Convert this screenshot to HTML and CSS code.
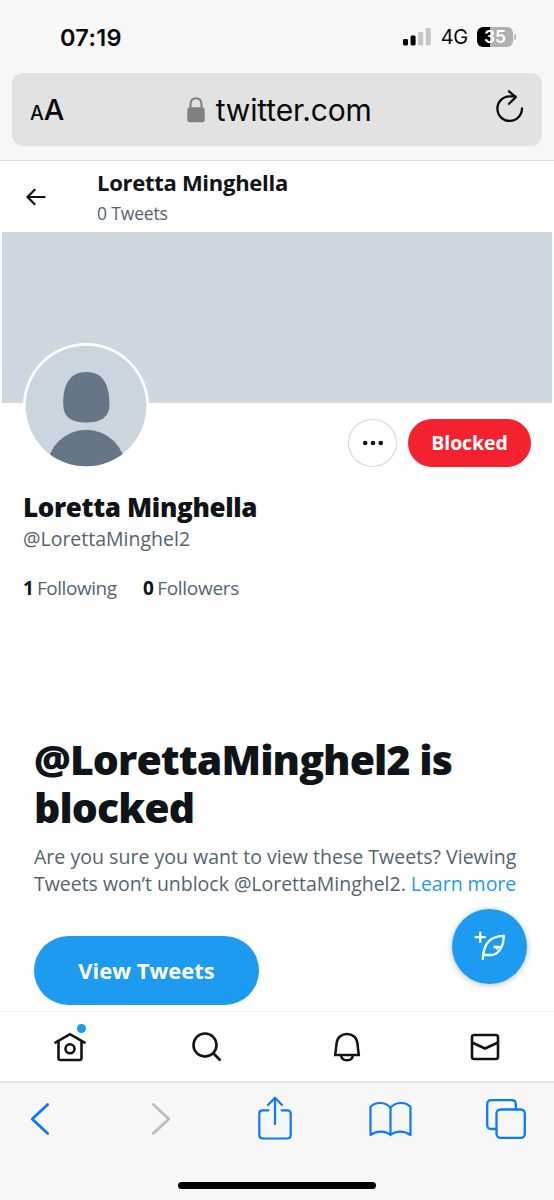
FILE: index.html
```html
<!DOCTYPE html>
<html lang="en">
<head>
<meta charset="utf-8">
<title>Loretta Minghella</title>
<link rel="stylesheet" href="styles.css">
</head>
<body>
<div class="phone">
  <div class="browser-top">
    <div class="status">
      <span class="clock">07:19</span>
      <div class="signals">
        <svg class="bars" width="28" height="18" viewBox="0 0 28 18"><rect x="0" y="11" width="5" height="6.5" rx="1.4"/><rect x="7.6" y="7.5" width="5" height="10" rx="1.4"/><g fill="#c6c6c6"><rect x="15.2" y="4" width="5" height="13.500" rx="1.4"/><rect x="22.800" y="0" width="5" height="17.500" rx="1.4"/></g></svg>
        <span class="network">4G</span>
        <div class="battery"><span class="level">35</span></div>
        <span class="battery-tip"></span>
      </div>
    </div>
    <div class="address">
      <span class="text-size"><small>A</small>A</span>
      <div class="domain">
        <svg width="18" height="26" viewBox="0 0 18 26"><rect x="0.300" y="10.300" width="17.400" height="15" rx="2.600" fill="#808084"/><path d="M3.500 11V7.200C3.500 3.300 5.800 1.200 9 1.200s5.500 2.100 5.500 6V11" fill="none" stroke="#808084" stroke-width="2.100"/></svg>
        <span>twitter.com</span>
      </div>
      <svg class="reload" width="30" height="36" viewBox="0 0 30 36"><path d="M27 18.500A12.300 12.300 0 1 1 14.700 6.300H20.500M14 1.300l6.800 5.800-6.800 6.700" fill="none" stroke="#0a0a0a" stroke-width="2.300" stroke-linecap="round" stroke-linejoin="round"/></svg>
    </div>
  </div>

  <header class="page-head">
    <svg width="20" height="18" viewBox="0 0 20 18"><path d="M19.500 9H2M9.200 1.200L1.500 9l7.700 7.800" fill="none" stroke="#0f1419" stroke-width="2.200"/></svg>
    <div class="head-text"><div class="head-name">Loretta Minghella</div><div class="head-count">0 Tweets</div></div>
  </header>

  <div class="banner"></div>
  <section class="profile">
    <div class="actions">
      <svg class="avatar" width="126" height="126" viewBox="0 0 126 126"><defs><clipPath id="face"><circle cx="63" cy="63" r="60.300"/></clipPath></defs><circle cx="63" cy="63" r="63" fill="#fff"/><g clip-path="url(#face)"><path d="M0 0h126v126H0z" fill="#cbd5dd"/><path d="M63.300 29C79 29 86.500 40 86.500 61c0 13-8 18.500-23.200 18.500S40.200 74 40.200 61c0-21 7.500-32 23.100-32z" fill="#657786"/><circle cx="63.300" cy="126" r="39.300" fill="#657786"/></g></svg>
      <div class="more"><svg width="22" height="6" viewBox="0 0 22 6"><g fill="#0f1419"><circle cx="3.200" cy="3" r="2.300"/><circle cx="11" cy="3" r="2.300"/><circle cx="18.800" cy="3" r="2.300"/></g></svg></div>
      <div class="blocked">Blocked</div>
    </div>
    <div class="name">Loretta Minghella</div>
    <div class="handle">@LorettaMinghel2</div>
    <div class="stats"><span class="following"><b>1</b> Following</span><span class="followers"><b>0</b> Followers</span></div>
  </section>

  <section class="notice">
    <h1><span class="title-one">@LorettaMinghel2 is</span><br><span class="title-two">blocked</span></h1>
    <p><span class="line-one">Are you sure you want to view these Tweets? Viewing</span><br><span class="line-two">Tweets won’t unblock @LorettaMinghel2. <a>Learn more</a></span></p>
    <div class="view">View Tweets</div>
  </section>

  <div class="compose">
    <svg width="32" height="32" viewBox="0 0 32 32"><g fill="none" stroke="#fff" stroke-width="2.300"><path d="M6.200 .7v11M.7 6.200h11"/><path d="M8.800 29C9 15 15 5 29.800 4.900c0 5-.9 8.500-2.400 11.400C24.800 21.500 21.500 24 17.500 24H9.500M19.500 15.900h8"/><path d="M20 15.900c2.300.3 3.300 1 3.600 2.600"/></g></svg>
  </div>

  <nav class="tabs">
    <div class="tab"><div class="home"><svg width="34" height="32" viewBox="0 0 34 32"><g fill="none" stroke="#0f1419" stroke-width="2.600"><path d="M1.500 13.200L17 4.200l15.500 9"/><path d="M5.500 11.500V28q0 2 2 2h19q2 0 2-2V11.500" /><circle cx="17" cy="18.800" r="4.500"/></g></svg><span class="dot"></span></div></div>
    <div class="tab"><svg width="30" height="30" viewBox="0 0 30 30"><g fill="none" stroke="#0f1419" stroke-width="2.600"><circle cx="13" cy="13" r="11.500"/><path d="M21 21l7.500 7.500"/></g></svg></div>
    <div class="tab"><svg width="28" height="30" viewBox="0 0 28 30"><g fill="none" stroke="#0f1419" stroke-width="2.500"><path d="M2.200 23L3.600 11.500C4 5.500 8.500 2 14 2s10 3.500 10.400 9.500L25.800 23z"/><path d="M8 23c.3 3.500 2.700 5.300 6 5.300s5.700-1.800 6-5.300"/></g></svg></div>
    <div class="tab"><svg width="30" height="28" viewBox="0 0 30 28"><g fill="none" stroke="#0f1419" stroke-width="2.600"><rect x="2" y="2" width="26" height="24" rx="2.200"/><path d="M2 9.500l13 6 13-6"/></g></svg></div>
  </nav>

  <footer class="toolbar">
    <div class="tools">
      <svg width="20" height="34" viewBox="0 0 20 34"><path d="M17.700 2.500L2.200 17l15.500 14.500" fill="none" stroke="#0a7aff" stroke-width="2.800" stroke-linecap="round" stroke-linejoin="round"/></svg>
      <svg class="forward" width="20" height="34" viewBox="0 0 20 34"><path d="M2.300 2.500L17.800 17 2.300 31.500" fill="none" stroke="#bdbdbd" stroke-width="2.800" stroke-linecap="round" stroke-linejoin="round"/></svg>
      <svg class="share" width="34" height="44" viewBox="0 0 34 44"><path d="M10.500 14.300H4.500Q1.300 14.300 1.300 17.500V39q0 3.500 3.500 3.500h24.400q3.500 0 3.500-3.500V17.800q0-3.500-3.500-3.500H23.500M17 28V2M10 9l7-7.200L24 9" fill="none" stroke="#0a7aff" stroke-width="2.200" stroke-linecap="round" stroke-linejoin="round"/></svg>
      <svg class="book" width="43" height="36" viewBox="0 0 43 36"><path d="M21.500 7C17 .5 6 .5 1.500 6v28c6-4.500 14.500-4.500 20 0V7C26 .5 37 .5 41.500 6v28c-6-4.500-14.500-4.500-20 0" fill="none" stroke="#0a7aff" stroke-width="2.200" stroke-linejoin="round"/></svg>
      <svg class="windows" width="40" height="40" viewBox="0 0 40 40"><g fill="none" stroke="#0a7aff" stroke-width="2.300"><rect x="10.500" y="10.500" width="28.300" height="28.300" rx="4"/><path d="M10 30H5.200q-4 0-4-4V5.200q0-4 4-4h20.600q4 0 4 4v5"/></g></svg>
    </div>
    <div class="grabber"></div>
  </footer>
</div>
</body>
</html>
```
FILE: styles.css
```css
* { box-sizing: border-box; }
body { margin: 0; background: #fff; }
svg { display: block; flex: none; }
.phone {
  position: relative;
  display: flex;
  flex-direction: column;
  width: 554px;
  height: 1200px;
  overflow: hidden;
  font-family: "Open Sans", "Noto Sans", sans-serif;
  color: #0f1419;
  white-space: nowrap;
}
.browser-top {
  height: 161px;
  flex: none;
  background: #f7f7f7;
  border-bottom: 1px solid #d9d9d9;
  font-family: Inter, "Liberation Sans", sans-serif;
  color: #0a0a0a;
}
.status { height: 73px; padding: 1px 38px 0 60px; display: flex; align-items: center; justify-content: space-between; }
.clock { font-size: 23.5px; font-weight: 600; letter-spacing: 0.3px; }
.signals { display: flex; align-items: center; }
.network { font-size: 20px; margin: 0 9px 0 10px; letter-spacing: -0.3px; }
.battery { width: 36px; height: 20px; border-radius: 6px; background: linear-gradient(90deg, #000 36%, #b0b0b0 36%); display: flex; align-items: center; justify-content: center; color: #fff; font-size: 17.5px; font-weight: 600; line-height: 20px; }
.battery-tip { width: 2px; height: 6px; margin-left: 1px; border-radius: 0 2px 2px 0; background: #b8b8b8; }
.address { height: 73px; margin: 0 12px; padding: 0 17px 0 18px; border-radius: 11px; background: #e2e2e2; display: flex; align-items: center; justify-content: space-between; }
.text-size { font-size: 29px; font-weight: 500; }
.text-size small { font-size: 19.5px; }
.domain { display: flex; align-items: center; gap: 11px; font-size: 30px; letter-spacing: -0.15px; margin-left: -1px; }
.reload { margin-bottom: 3px; }
.page-head { height: 71px; flex: none; display: flex; align-items: center; padding-left: 26px; gap: 51px; background: #fefefe; }
.head-text { margin-top: -1px; }
.head-name { font-size: 22px; line-height: 28px; font-weight: 700; letter-spacing: -0.28px; }
.head-count { font-size: 17.5px; line-height: 24px; margin-top: 5px; letter-spacing: -0.15px; color: #536471; }
.banner { height: 171px; flex: none; margin: 0 2px; background: #cfd7df; }
.profile { height: 329px; flex: none; padding: 16px 23px 0; }
.actions { position: relative; display: flex; justify-content: flex-end; gap: 11px; height: 48px; }
.avatar { position: absolute; left: 0; top: -76px; }
.more { width: 49px; height: 48px; border: 1px solid #cfd9de; border-radius: 50%; display: flex; align-items: center; justify-content: center; }
.blocked { width: 123px; height: 48px; border-radius: 24px; background: #f4212e; color: #fff; font-size: 19.5px; font-weight: 700; line-height: 47px; letter-spacing: -0.1px; text-align: center; }
.name { margin-top: 22px; font-size: 26px; line-height: 36px; font-weight: 800; letter-spacing: -0.35px; }
.handle { margin-top: 1px; font-size: 19.5px; line-height: 26px; color: #536471; }
.stats { margin-top: 23px; display: flex; gap: 27px; font-size: 19px; line-height: 26px; letter-spacing: -0.45px; word-spacing: -1px; color: #536471; }
.stats b { color: #0f1419; }
.following { width: 93px; }
.followers { letter-spacing: -0.3px; }
.notice { flex: none; padding-left: 34px; }
h1 { margin: 3px 0 0; font-size: 41px; line-height: 48px; font-weight: 800; letter-spacing: -0.9px; }
p { margin: 12px 0 0; font-size: 19.5px; line-height: 27px; color: #536471; }
.line-one { letter-spacing: 0.03px; }
.line-two { letter-spacing: -0.02px; }
p a { color: #1d9bf0; }
.view { margin-top: 39px; width: 225px; height: 69px; border-radius: 35px; background: #1d9bf0; color: #fff; font-size: 22px; font-weight: 700; line-height: 68px; text-align: center; }
.compose { position: absolute; left: 452px; top: 909px; width: 75px; height: 75px; border-radius: 50%; background: #1d9bf0; box-shadow: 0 1px 6px rgba(0, 0, 0, .28); display: flex; align-items: center; justify-content: center; }
.tabs { margin-top: auto; height: 70px; flex: none; border-top: 1px solid #eff3f4; display: grid; grid-template-columns: repeat(4, 138.500px); }
.tab { display: flex; align-items: center; justify-content: center; }
.tab:nth-child(1), .tab:nth-child(3) { padding-left: 2px; }
.tab:nth-child(1) { padding-bottom: 2px; }
.tab:nth-child(2) { padding-right: 1px; }
.home { position: relative; }
.dot { position: absolute; right: 1px; top: -6px; width: 9px; height: 9px; border-radius: 50%; background: #1d9bf0; }
.toolbar { height: 119px; flex: none; border-top: 2px solid #e6e6e6; background: #f7f7f7; }
.tools { height: 75px; padding: 0 28px 4px 30px; display: flex; align-items: center; }
.forward { margin-left: 101px; }
.share { margin-left: 87px; margin-top: -2px; }
.book { margin-left: 77px; }
.windows { margin-left: 74px; }
.grabber { width: 198px; height: 7px; margin: 24px auto 0; border-radius: 4px; background: #000; }
```
